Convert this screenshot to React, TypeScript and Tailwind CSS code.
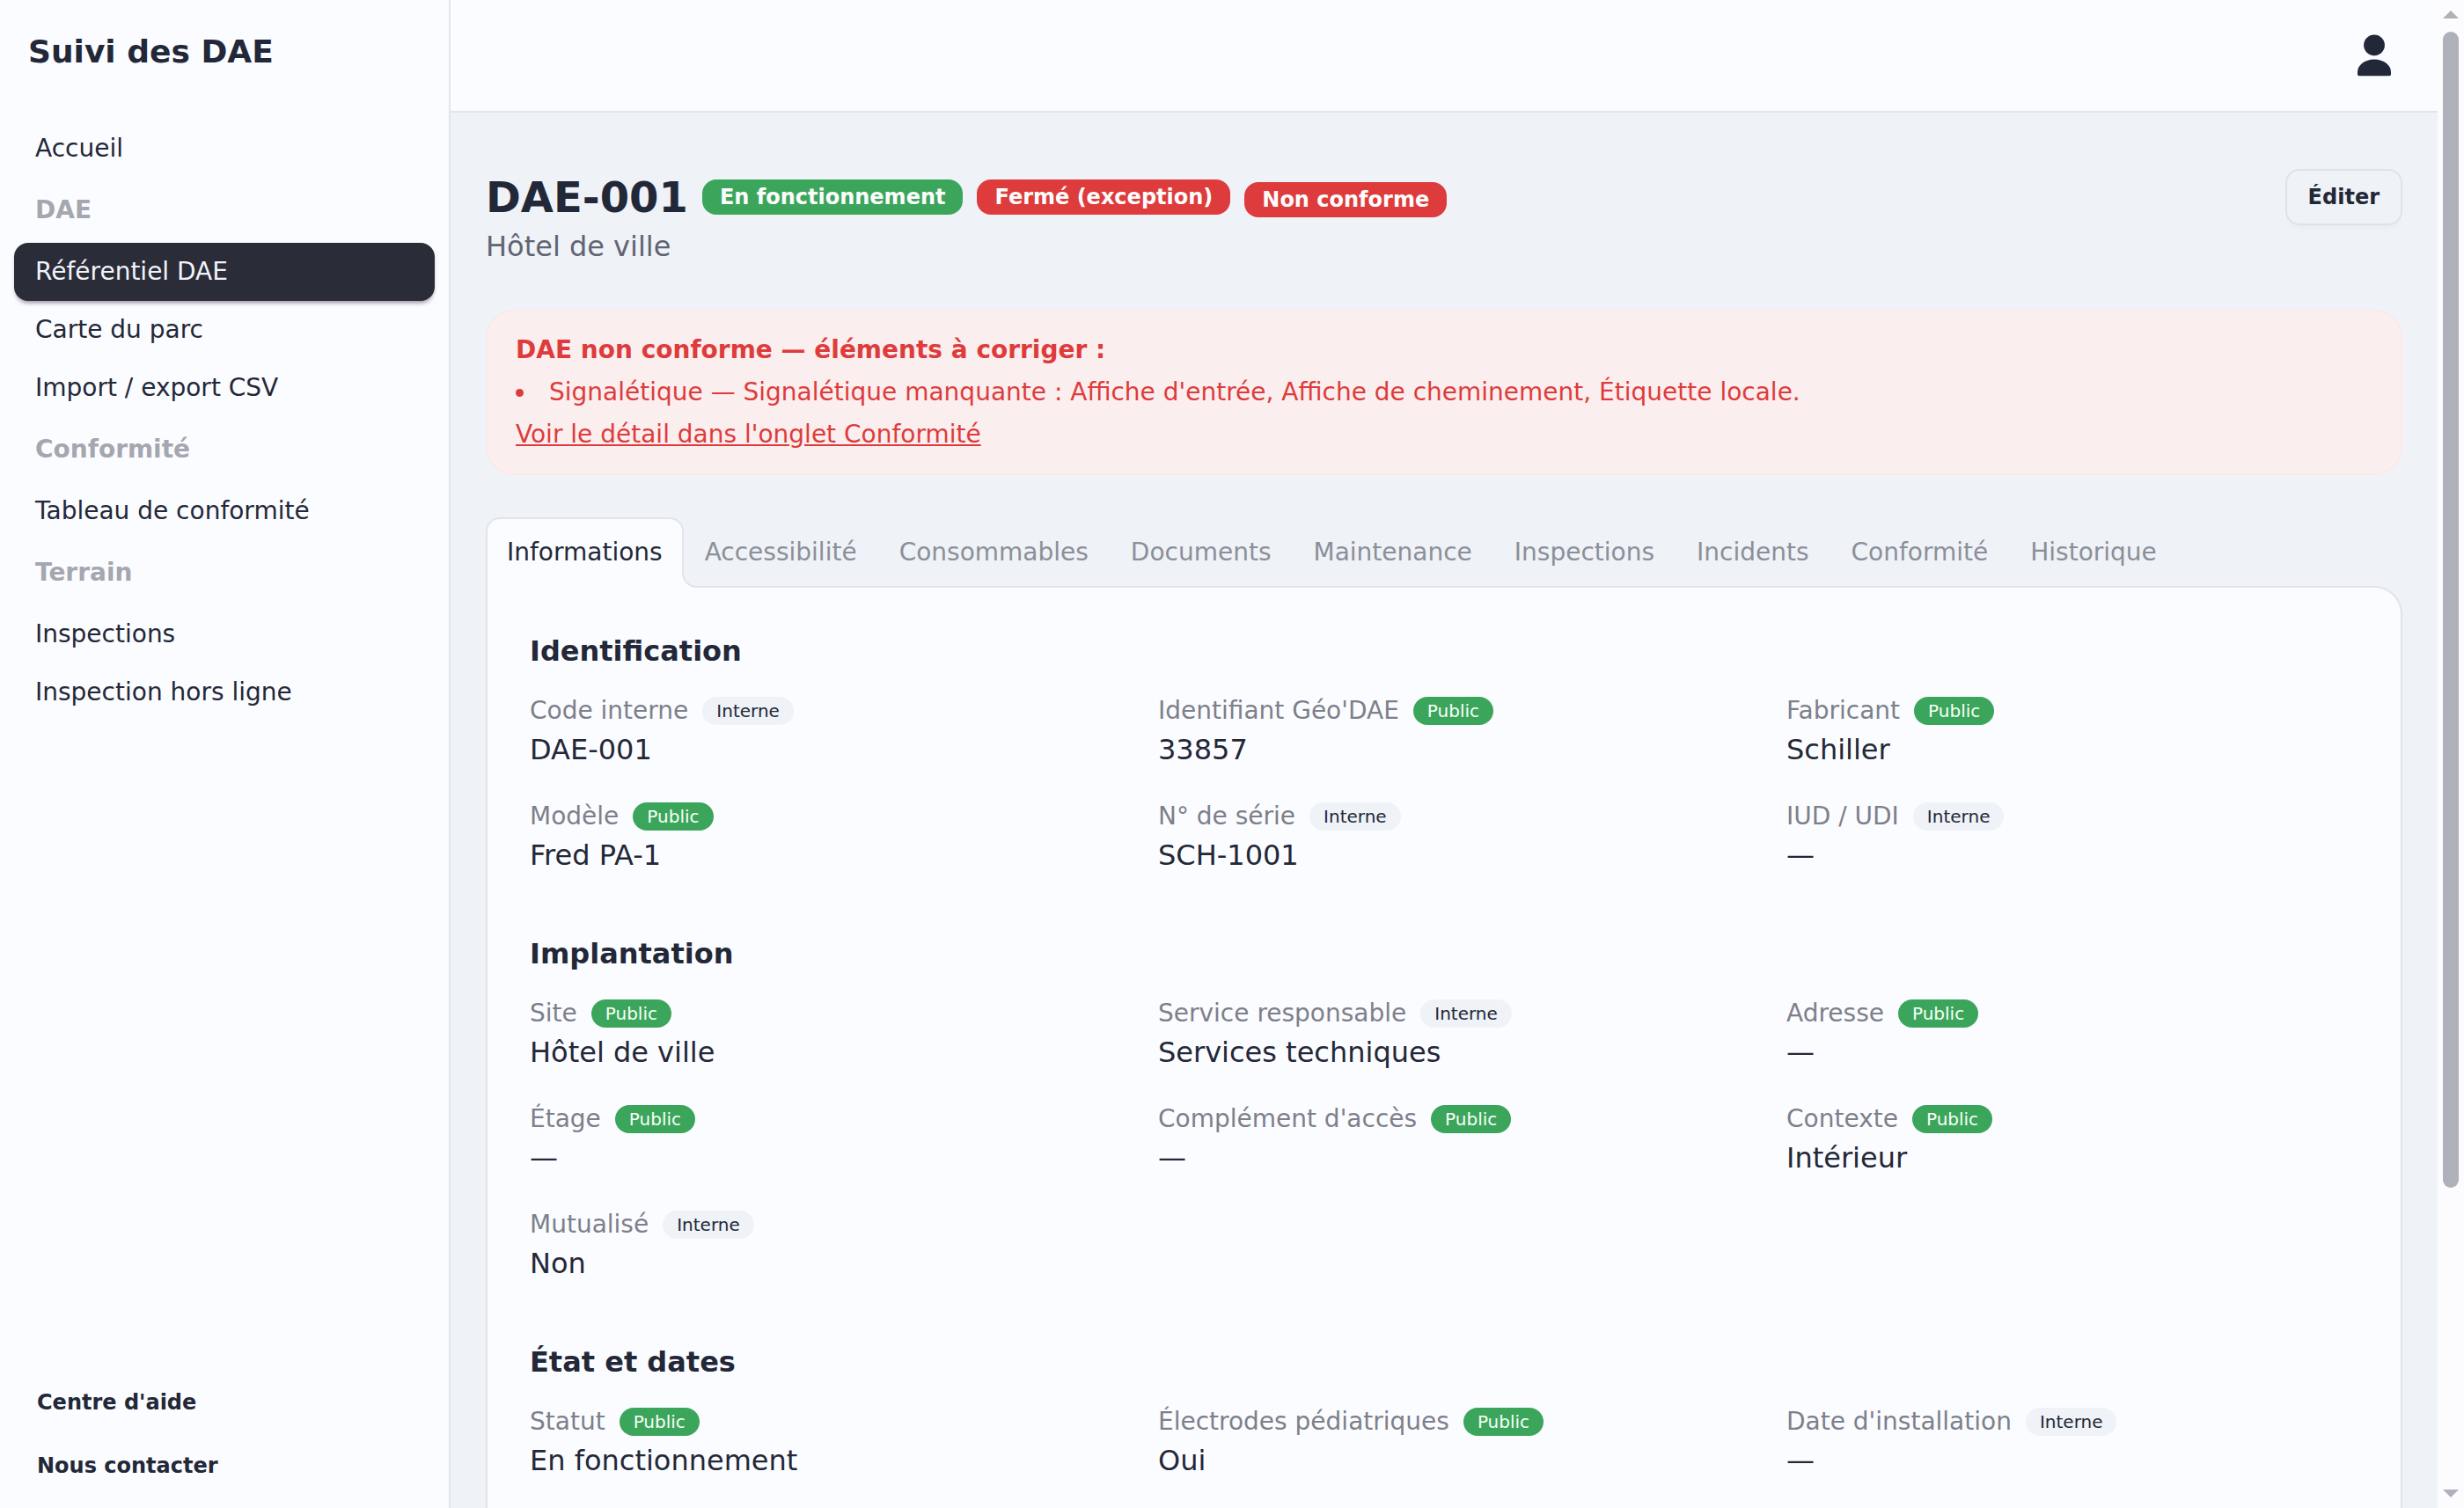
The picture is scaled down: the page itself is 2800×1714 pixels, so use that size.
import React from "react";

type Tone = "Public" | "Interne";
type Field = { label: string; tone: Tone; value: string };
type Section = { title: string; fields: Field[] };

const sections: Section[] = [
  {
    title: "Identification",
    fields: [
      { label: "Code interne", tone: "Interne", value: "DAE-001" },
      { label: "Identifiant Géo'DAE", tone: "Public", value: "33857" },
      { label: "Fabricant", tone: "Public", value: "Schiller" },
      { label: "Modèle", tone: "Public", value: "Fred PA-1" },
      { label: "N° de série", tone: "Interne", value: "SCH-1001" },
      { label: "IUD / UDI", tone: "Interne", value: "—" },
    ],
  },
  {
    title: "Implantation",
    fields: [
      { label: "Site", tone: "Public", value: "Hôtel de ville" },
      { label: "Service responsable", tone: "Interne", value: "Services techniques" },
      { label: "Adresse", tone: "Public", value: "—" },
      { label: "Étage", tone: "Public", value: "—" },
      { label: "Complément d'accès", tone: "Public", value: "—" },
      { label: "Contexte", tone: "Public", value: "Intérieur" },
      { label: "Mutualisé", tone: "Interne", value: "Non" },
    ],
  },
  {
    title: "État et dates",
    fields: [
      { label: "Statut", tone: "Public", value: "En fonctionnement" },
      { label: "Électrodes pédiatriques", tone: "Public", value: "Oui" },
      { label: "Date d'installation", tone: "Interne", value: "—" },
    ],
  },
];

const nav: { label: string; kind: "item" | "title" | "active" }[] = [
  { label: "Accueil", kind: "item" },
  { label: "DAE", kind: "title" },
  { label: "Référentiel DAE", kind: "active" },
  { label: "Carte du parc", kind: "item" },
  { label: "Import / export CSV", kind: "item" },
  { label: "Conformité", kind: "title" },
  { label: "Tableau de conformité", kind: "item" },
  { label: "Terrain", kind: "title" },
  { label: "Inspections", kind: "item" },
  { label: "Inspection hors ligne", kind: "item" },
];

const navStyles = {
  item: "h-[66px] text-[#232838]",
  title: "h-[74px] font-bold text-[#a5a7b0]",
  active:
    "h-[66px] rounded-2xl bg-[#2a2c38] text-[#f1f3f9] shadow-[0_4px_5px_-2px_rgba(42,28,56,0.5)]",
};

const tabs = [
  "Accessibilité",
  "Consommables",
  "Documents",
  "Maintenance",
  "Inspections",
  "Incidents",
  "Conformité",
  "Historique",
];

function Sidebar() {
  return (
    <aside className="flex w-[512px] shrink-0 flex-col border-r-2 border-[#e2e3ec] bg-[#fbfcff] p-4">
      <div className="flex h-[86px] items-center px-4 text-4xl leading-[56px] font-bold">
        Suivi des DAE
      </div>
      <nav className="mt-[34px] flex flex-col text-[28px] leading-[42px]">
        {nav.map((n) => (
          <a key={n.label} className={`flex items-center px-6 ${navStyles[n.kind]}`}>
            {n.label}
          </a>
        ))}
      </nav>
      <div className="mt-auto flex flex-col gap-2 text-2xl font-bold">
        <a className="flex h-16 items-center px-[26px]">Centre d'aide</a>
        <a className="flex h-16 items-center px-[26px]">Nous contacter</a>
      </div>
    </aside>
  );
}

function StatusBadge({ children, tone }: { children: React.ReactNode; tone: "ok" | "error" }) {
  return (
    <span
      className={`flex h-10 items-center rounded-2xl px-5 text-2xl font-bold text-[#fdfdfd] ${
        tone === "ok" ? "bg-[#3ba65b]" : "bg-[#de3b3c]"
      }`}
    >
      {children}
    </span>
  );
}

function VisibilityBadge({ tone }: { tone: Tone }) {
  return (
    <span
      className={`flex h-8 items-center rounded-2xl px-4 text-xl ${
        tone === "Public" ? "bg-[#3ba65b] text-[#f8fff9]" : "bg-[#eff2f7] text-[#232838]"
      }`}
    >
      {tone}
    </span>
  );
}

function Scrollbar() {
  return (
    <div className="flex w-[30px] shrink-0 flex-col items-center bg-[#fcfcff] py-3 text-[#aeb0ba]">
      <svg className="h-[9px] w-[18px]" viewBox="0 0 18 9" fill="currentColor">
        <path d="M9 0 18 9H0z" />
      </svg>
      <div className="mt-[15px] h-[1314px] w-[18px] rounded-full bg-[#aeb0ba]" />
      <svg className="mt-auto h-[9px] w-[18px]" viewBox="0 0 18 9" fill="currentColor">
        <path d="M9 9 18 0H0z" />
      </svg>
    </div>
  );
}

export default function App() {
  return (
    <div className="flex h-[1714px] w-[2800px] overflow-hidden bg-[#eff2f7] font-['DejaVu_Sans',sans-serif] text-[#232838]">
      <Sidebar />
      <div className="flex min-w-0 flex-1 flex-col">
        <header className="flex h-32 shrink-0 items-center justify-end border-b-2 border-[#e2e3ec] bg-[#fbfcff] px-12">
          <svg className="h-12 w-12" viewBox="0 0 48 48" fill="currentColor">
            <circle cx="24" cy="12.300" r="11.900" />
            <path d="M24 28.500c-11 0-19 6.500-19 14.500v2.500q0 1.800 1.800 1.800h34.400q1.800 0 1.800-1.800V43c0-8-8-14.500-19-14.500z" />
          </svg>
        </header>

        <main className="flex flex-1 flex-col px-10 pt-16">
          <div className="flex h-[112px] items-start justify-between">
            <div>
              <div className="flex h-16 items-center gap-4">
                <h1 className="text-5xl font-bold">DAE-001</h1>
                <StatusBadge tone="ok">En fonctionnement</StatusBadge>
                <StatusBadge tone="error">Fermé (exception)</StatusBadge>
                <div className="pt-1.5">
                  <StatusBadge tone="error">Non conforme</StatusBadge>
                </div>
              </div>
              <p className="text-[32px] leading-[48px] text-[#616471]">Hôtel de ville</p>
            </div>
            <button className="h-16 rounded-2xl border-2 border-[#e1e2e6] bg-[#eff2f7] px-6 text-2xl font-bold shadow-[0_6px_6px_-4px_rgba(35,40,56,0.04)]">
              Éditer
            </button>
          </div>

          <div className="mt-12 flex flex-col gap-2 rounded-[32px] border-2 border-[#fce9ea] bg-[#fbeeee] px-8 py-6 text-[28px] leading-10 text-[#de3b3c]">
            <p className="font-bold">DAE non conforme — éléments à corriger :</p>
            <ul className="list-inside list-disc">
              <li>
                Signalétique — Signalétique manquante : Affiche d'entrée, Affiche de cheminement,
                Étiquette locale.
              </li>
            </ul>
            <a className="underline">Voir le détail dans l'onglet Conformité</a>
          </div>

          <div className="mt-12 flex h-20 text-[28px]">
            <div className="relative z-10 flex items-center rounded-t-2xl border-2 border-b-0 border-[#e2e3ec] bg-[#fbfcff] px-[22px] pb-0.5">
              Informations
              <svg
                className="absolute -right-[18px] bottom-0 h-[18px] w-[18px]"
                viewBox="0 0 18 18"
                fill="none"
              >
                <path d="M0 0A18 18 0 0 0 18 18H0z" fill="#fbfcff" />
                <path d="M1 0a16 16 0 0 0 16 17h1" stroke="#e2e3ec" strokeWidth="2" />
              </svg>
            </div>
            {tabs.map((t) => (
              <div key={t} className="flex items-center px-6 text-[#8b8f99]">
                {t}
              </div>
            ))}
          </div>

          <div className="-mt-0.5 flex flex-1 flex-col gap-16 rounded-tr-[32px] border-2 border-b-0 border-[#e2e3ec] bg-[#fbfcff] px-12 pt-12">
            {sections.map((s) => (
              <section key={s.title}>
                <h2 className="text-[32px] leading-[48px] font-bold">{s.title}</h2>
                <div className="mt-6 grid grid-cols-3 gap-x-16 gap-y-8">
                  {s.fields.map((f) => (
                    <div key={f.label}>
                      <div className="flex h-10 items-center gap-4 text-[28px] leading-10 text-[#7d808b]">
                        <span>{f.label}</span>
                        <VisibilityBadge tone={f.tone} />
                      </div>
                      <div className="text-[32px] leading-[48px]">{f.value}</div>
                    </div>
                  ))}
                </div>
              </section>
            ))}
          </div>
        </main>
      </div>
      <Scrollbar />
    </div>
  );
}
